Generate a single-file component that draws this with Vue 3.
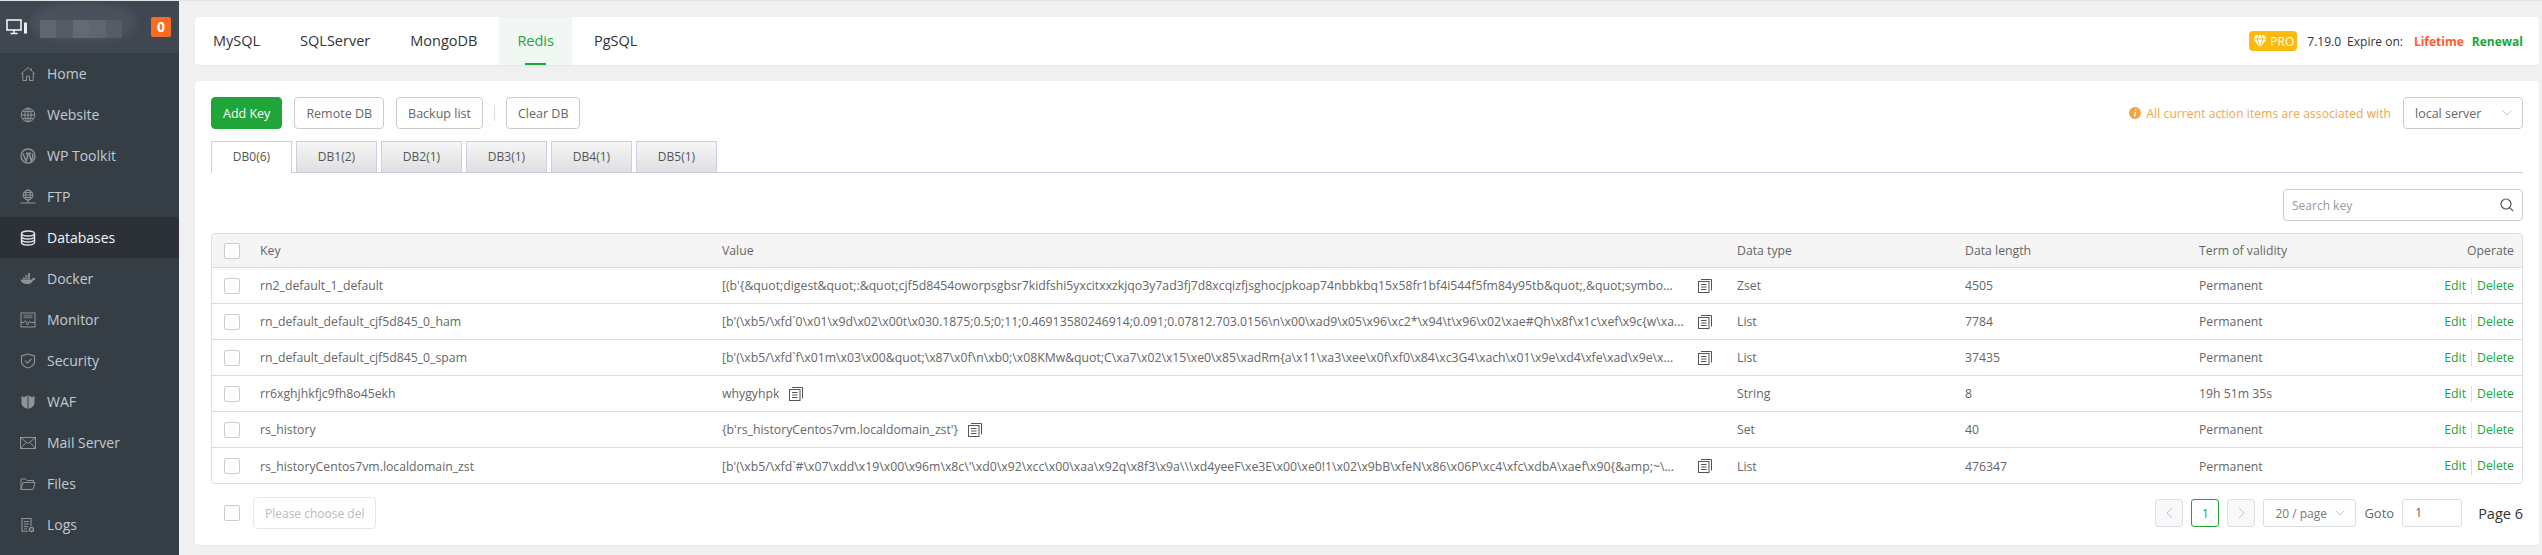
<script setup>
const menu = [
  { name: 'Home', icon: 'home' },
  { name: 'Website', icon: 'globe' },
  { name: 'WP Toolkit', icon: 'wp' },
  { name: 'FTP', icon: 'ftp' },
  { name: 'Databases', icon: 'db', active: true },
  { name: 'Docker', icon: 'docker' },
  { name: 'Monitor', icon: 'monitor' },
  { name: 'Security', icon: 'shield' },
  { name: 'WAF', icon: 'waf' },
  { name: 'Mail Server', icon: 'mail' },
  { name: 'Files', icon: 'folder' },
  { name: 'Logs', icon: 'logs' },
]
const dbTabs = ['MySQL', 'SQLServer', 'MongoDB', 'Redis', 'PgSQL']
const dbs = ['DB0(6)', 'DB1(2)', 'DB2(1)', 'DB3(1)', 'DB4(1)', 'DB5(1)']
const rows = [
  { key: 'rn2_default_1_default', value: "[(b'{&quot;digest&quot;:&quot;cjf5d8454oworpsgbsr7kidfshi5yxcitxxzkjqo3y7ad3fj7d8xcqizfjsghocjpkoap74nbbkbq15x58fr1bf4i544f5fm84y95tb&quot;,&quot;symbo...", type: 'Zset', len: '4505', term: 'Permanent', long: true },
  { key: 'rn_default_default_cjf5d845_0_ham', value: "[b'(\\xb5/\\xfd`0\\x01\\x9d\\x02\\x00t\\x030.1875;0.5;0;11;0.46913580246914;0.091;0.07812.703.0156\\n\\x00\\xad9\\x05\\x96\\xc2*\\x94\\t\\x96\\x02\\xae#Qh\\x8f\\x1c\\xef\\x9c{w\\xa...", type: 'List', len: '7784', term: 'Permanent', long: true },
  { key: 'rn_default_default_cjf5d845_0_spam', value: "[b'(\\xb5/\\xfd`f\\x01m\\x03\\x00&quot;\\x87\\x0f\\n\\xb0;\\x08KMw&quot;C\\xa7\\x02\\x15\\xe0\\x85\\xadRm{a\\x11\\xa3\\xee\\x0f\\xf0\\x84\\xc3G4\\xach\\x01\\x9e\\xd4\\xfe\\xad\\x9e\\x...", type: 'List', len: '37435', term: 'Permanent', long: true },
  { key: 'rr6xghjhkfjc9fh8o45ekh', value: 'whygyhpk', type: 'String', len: '8', term: '19h 51m 35s' },
  { key: 'rs_history', value: "{b'rs_historyCentos7vm.localdomain_zst'}", type: 'Set', len: '40', term: 'Permanent' },
  { key: 'rs_historyCentos7vm.localdomain_zst', value: "[b'(\\xb5/\\xfd`#\\x07\\xdd\\x19\\x00\\x96m\\x8c\\'\\xd0\\x92\\xcc\\x00\\xaa\\x92q\\x8f3\\x9a\\\\\\xd4yeeF\\xe3E\\x00\\xe0!1\\x02\\x9bB\\xfeN\\x86\\x06P\\xc4\\xfc\\xdbA\\xaef\\x90{&amp;~\\...", type: 'List', len: '476347', term: 'Permanent', long: true },
]
</script>

<template>
  <div class="page">
    <aside class="side">
      <div class="side-head">
        <svg class="pc" viewBox="0 0 22 16" width="22" height="16" fill="none" stroke="#f2f3f4" stroke-width="1.6">
          <rect x="1" y="1" width="14" height="10" />
          <path d="M8 11v3M4.5 14.500h7" />
          <rect x="18" y="3.500" width="3" height="11" fill="#f2f3f4" stroke="none" />
        </svg>
        <div class="blur-name">
          <span class="m1"></span><span class="m2"></span><span class="m3"></span><span class="m1"></span><span class="m2"></span>
        </div>
        <span class="badge">0</span>
      </div>
      <nav>
        <a v-for="m in menu" :key="m.name" class="item" :class="{ on: m.active }">
          <svg class="ic" viewBox="0 0 16 16" width="16" height="16" fill="none" stroke="currentColor" stroke-width="1">
            <template v-if="m.icon === 'home'">
              <path d="M.8 8.200 8 1.500l7.200 6.700M2.800 7v7.500h3.700v-4.300h3v4.300h3.700V7M11.500 2.500v2" />
            </template>
            <template v-else-if="m.icon === 'globe'">
              <circle cx="8" cy="8" r="6.800" />
              <ellipse cx="8" cy="8" rx="3.200" ry="6.800" />
              <path d="M8 1.200v13.600M1.200 8h13.600M2.200 4.600h11.600M2.200 11.400h11.600" />
            </template>
            <template v-else-if="m.icon === 'wp'">
              <circle cx="8" cy="8" r="7" stroke-width="1.300" />
              <path d="M3 5.500 6 13l1.800-5-1.300-2.800M6 5.200h5M9 5.300 11.300 13l1.500-4.200c.5-1.300 0-2.400-.9-3.400" stroke-width="1.500" />
            </template>
            <template v-else-if="m.icon === 'ftp'">
              <circle cx="8" cy="6" r="5" />
              <ellipse cx="8" cy="6" rx="2.300" ry="5" />
              <path d="M3 6h10M3.800 3.500h8.400M3.800 8.500h8.400M8 11v2.500M.5 14h15" stroke-width="1.100" />
            </template>
            <template v-else-if="m.icon === 'db'">
              <ellipse cx="8" cy="3.500" rx="6.500" ry="2.500" stroke-width="1.400" />
              <path d="M1.500 3.500v9c0 1.400 2.900 2.500 6.500 2.500s6.500-1.100 6.500-2.500v-9M1.500 6.500C1.500 7.900 4.400 9 8 9s6.500-1.100 6.500-2.500M1.500 9.500c0 1.400 2.900 2.500 6.500 2.500s6.500-1.100 6.500-2.500" stroke-width="1.400" />
            </template>
            <template v-else-if="m.icon === 'docker'">
              <path fill="currentColor" stroke="none" d="M.5 8.500h11.600c.3-1 1-1.500 2-1.400l1.400.3c-.3 1.300-1.200 2-2.500 2-1 2.400-3 3.600-6 3.600-3.800 0-6-1.600-6.500-4.500zM3 6.500h2v1.500H3zM5.500 6.500h2v1.500h-2zM8 6.500h2v1.500H8zM5.500 4.300h2v1.700h-2zM8 4.300h2v1.700H8zM8 2.200h2V4H8z" />
            </template>
            <template v-else-if="m.icon === 'monitor'">
              <rect x="1" y="1" width="14" height="14" />
              <path d="M1 10.500h3l1.500-2 2 4.500L9.500 9l1.200 1.500H15" />
              <path d="M3.500 3.500h9M3.500 5.500h9" stroke-width="1.500" opacity=".6" />
            </template>
            <template v-else-if="m.icon === 'shield'">
              <path d="M8 1 14.500 3v5.500c0 3.200-2.900 5.400-6.500 6.500-3.600-1.100-6.500-3.300-6.500-6.500V3zM5 7.500l2.300 2.500L11.500 6" stroke-width="1.100" />
            </template>
            <template v-else-if="m.icon === 'waf'">
              <path fill="currentColor" stroke="none" d="M1.500 2 4 3.200 8 1l4 2.200L14.500 2v7c0 3-3 5-6.500 6-3.500-1-6.500-3-6.500-6z" />
              <path stroke="#363e45" d="M8 1v14" />
            </template>
            <template v-else-if="m.icon === 'mail'">
              <rect x=".5" y="2.500" width="15" height="11" />
              <path d="m.5 2.500 7.500 6 7.500-6M.5 13.500 6 7.500M15.500 13.500 10 7.500" />
            </template>
            <template v-else-if="m.icon === 'folder'">
              <path d="M1 13.500V3h4.500l1.500 1.500h6.500v2M1 13.500 3 6.500h12.200L13 13.500z" />
            </template>
            <template v-else>
              <path d="M11 9V1.500H2v12.800h6M4 4.500h5M4 7h5M4 9.500h4M4 12h3" stroke-width="1.100" />
              <circle cx="11.500" cy="12.500" r="2" stroke-width="1.400" />
            </template>
          </svg>
          <span>{{ m.name }}</span>
        </a>
      </nav>
    </aside>

    <main class="main">
      <section class="card top">
        <div class="top-tabs">
          <a v-for="t in dbTabs" :key="t" class="top-tab" :class="{ on: t === 'Redis' }">{{ t }}</a>
        </div>
        <div class="ver">
          <span class="pro">
            <svg viewBox="0 0 14 12" width="14" height="12" fill="#fff">
              <path d="M3 0h2.200L4 3.500H.6zM6 0h2l1.100 3.500H4.900zM8.800 0H11l2.400 3.500H10zM.6 4.500H4L6.500 12zM5 4.500h4L7 12zM10 4.500h3.400L7.500 12z" />
            </svg>
            PRO
          </span>
          <span class="v">7.19.0</span>
          <span class="exp">Expire on:</span>
          <b class="life">Lifetime</b>
          <b class="renew">Renewal</b>
        </div>
      </section>

      <section class="card body">
        <div class="toolbar">
          <div class="btns">
            <button class="btn primary">Add Key</button>
            <button class="btn">Remote DB</button>
            <button class="btn">Backup list</button>
            <i class="vr"></i>
            <button class="btn">Clear DB</button>
          </div>
          <div class="assoc">
            <svg viewBox="0 0 12 12" width="12" height="12">
              <circle cx="6" cy="6" r="6" fill="#efa648" />
              <path d="M6.700 2.300v1.300M6.400 5l-.8 4.500" stroke="#fff" stroke-width="1.400" fill="none" />
            </svg>
            <span class="assoc-t">All current action items are associated with</span>
            <div class="select">
              <span>local server</span>
              <svg viewBox="0 0 10 6" width="10" height="6" fill="none" stroke="#c4c6cb"><path d="m.5.500 4.500 4.500L9.500.500" /></svg>
            </div>
          </div>
        </div>

        <div class="db-tabs">
          <a v-for="(d, i) in dbs" :key="d" class="db-tab" :class="{ on: i === 0 }">{{ d }}</a>
        </div>

        <div class="search-row">
          <div class="search">
            <span>Search key</span>
            <svg viewBox="0 0 14 14" width="14" height="14" fill="none" stroke="#555" stroke-width="1.200"><circle cx="6" cy="6" r="5" /><path d="m9.600 9.600 3.600 3.600" /></svg>
          </div>
        </div>

        <div class="table-wrap">
          <table>
            <colgroup>
              <col class="c0" /><col class="c1" /><col class="c2" /><col class="c3" /><col class="c4" /><col class="c5" /><col />
            </colgroup>
            <thead>
              <tr>
                <th><i class="cb"></i></th>
                <th>Key</th><th>Value</th><th>Data type</th><th>Data length</th><th>Term of validity</th>
                <th class="r">Operate</th>
              </tr>
            </thead>
            <tbody>
              <tr v-for="r in rows" :key="r.key">
                <td><i class="cb"></i></td>
                <td>{{ r.key }}</td>
                <td>
                  <div class="val" :class="{ long: r.long }">
                    <span class="val-t">{{ r.value }}</span>
                    <svg class="copy" viewBox="0 0 14 14" width="14" height="14" fill="none" stroke="#555"><rect x=".5" y="2.500" width="10.500" height="11" /><path d="M3 5.500h5.500M3 8h5.500M3 10.500h5.500M3 .5h10.500v11" /></svg>
                  </div>
                </td>
                <td>{{ r.type }}</td>
                <td>{{ r.len }}</td>
                <td>{{ r.term }}</td>
                <td class="r ops"><a>Edit</a><i></i><a>Delete</a></td>
              </tr>
            </tbody>
          </table>
        </div>

        <div class="foot">
          <div class="foot-l">
            <i class="cb"></i>
            <button class="btn ghost">Please choose del</button>
          </div>
          <div class="pager">
            <span class="pg dis"><svg viewBox="0 0 7 12" width="7" height="12" fill="none" stroke="#c0c4cc"><path d="M6 1 1 6l5 5" /></svg></span>
            <span class="pg cur">1</span>
            <span class="pg dis"><svg viewBox="0 0 7 12" width="7" height="12" fill="none" stroke="#c0c4cc"><path d="m1 1 5 5-5 5" /></svg></span>
            <span class="size">20 / page<svg viewBox="0 0 10 6" width="10" height="6" fill="none" stroke="#c4c6cb"><path d="m.5.500 4.500 4.500L9.500.500" /></svg></span>
            <span class="goto">Goto</span>
            <span class="go-in">1</span>
            <span class="total">Page 6</span>
          </div>
        </div>
      </section>
    </main>
  </div>
</template>

<style>
html, body { margin: 0; background: #f0f0f0; }
</style>

<style scoped>
.page { display: flex; height: 554px; border-top: 1px solid #e2e2e2; overflow: hidden; background: #f0f0f0; font-family: "Open Sans", "Noto Sans", sans-serif; font-size: 12px; color: #666; }
.side { width: 179px; flex: none; background: #363e45; }
.side-head { height: 52px; background: #3f4750; display: flex; align-items: center; padding: 0 8px 0 6px; position: relative; box-sizing: border-box; }
.pc { flex: none; margin-top: -1px; }
.blur-name { flex: 1; height: 18px; margin: 0 29px 0 12px; display: flex; position: relative; top: 2px; }
.blur-name::before { content: ""; position: absolute; left: -9px; right: -14px; top: -17px; bottom: -4px; background: #49515a; border-radius: 45%; filter: blur(3px); }
.blur-name span { flex: 1; position: relative; }
.m1 { background: #5f666d; }
.m2 { background: #555c65; }
.m3 { background: #646a71; }
.badge { width: 20px; height: 20px; flex: none; background: #fb6a21; color: #fff; font-weight: 700; font-size: 14px; line-height: 20px; text-align: center; border-radius: 2px; margin-top: -1px; }
.item { height: 41px; display: flex; align-items: center; gap: 11px; padding-left: 20px; font-size: 14px; color: #c3cad1; }
.item .ic { color: #8e9499; flex: none; }
.item.on { background: #2c3138; color: #f4f6f8; }
.item.on .ic { color: #e2e4e6; }

.main { flex: 1; min-width: 0; padding: 16px 3px 0 16px; display: flex; flex-direction: column; gap: 16px; }
.card { background: #fff; border-radius: 4px; box-shadow: 0 1px 1px rgba(0, 0, 0, .04); }
.top { height: 48px; display: flex; justify-content: space-between; align-items: center; padding: 0 16px 0 18px; box-sizing: border-box; }
.top-tabs { display: flex; gap: 4px; height: 100%; margin-left: -18px; padding-left: 0; }
.top-tab { position: relative; padding: 0 18px; line-height: 48px; font-size: 14.5px; color: #333; }
.top-tab.on { background: #f1f8f3; color: #20a53a; }
.top-tab.on::after { content: ""; position: absolute; left: 26px; right: 26px; bottom: 0; height: 2px; background: #20a53a; }
.ver { display: flex; align-items: center; color: #333; font-size: 12px; }
.pro { display: flex; align-items: center; gap: 3px; width: 48px; height: 20px; box-sizing: border-box; padding-left: 4px; background: #fdb90c; color: #fff; border-radius: 4px; font-size: 12px; font-weight: 400; margin-right: 10px; }
.v { margin-right: 6px; }
.exp { margin-right: 11px; }
.life { color: #ff5a2b; margin-right: 8px; }
.renew { color: #20a53a; }

.body { flex: none; height: 464px; box-sizing: border-box; padding: 16px; display: flex; flex-direction: column; }
.toolbar { display: flex; justify-content: space-between; height: 32px; }
.btns { display: flex; align-items: center; gap: 12px; }
.btn { height: 32px; padding: 0 11px; background: #fff; border: 1px solid #ccc; border-radius: 4px; color: #666; font: inherit; font-size: 12.5px; box-sizing: border-box; }
.primary { background: #20a53a; border-color: #20a53a; color: #fff; }
.vr { width: 1px; height: 16px; background: #ddd; margin: 0 -1px; }
.assoc { display: flex; align-items: center; color: #efa648; }
.assoc-t { margin-left: 5px; letter-spacing: .1px; }
.select { width: 120px; height: 32px; margin-left: 12px; box-sizing: border-box; border: 1px solid #ccc; border-radius: 4px; padding: 0 10px 0 11px; display: flex; align-items: center; justify-content: space-between; color: #666; font-size: 12.5px; }
.db-tabs { margin-top: 12px; display: flex; gap: 4px; height: 32px; box-sizing: border-box; border-bottom: 1px solid #cfcde0; }
.db-tab { width: 81px; height: 31px; box-sizing: border-box; border: 1px solid #cfcde0; border-bottom: none; text-align: center; line-height: 30px; color: #555; background: linear-gradient(#f6f6f6, #dfdfe2); }
.db-tab.on { height: 32px; background: #fff; }
.search-row { margin-top: 16px; display: flex; justify-content: flex-end; }
.search { width: 240px; height: 32px; box-sizing: border-box; border: 1px solid #ccc; border-radius: 4px; padding: 0 8px; display: flex; align-items: center; justify-content: space-between; color: #999; }
.table-wrap { margin-top: 12px; border: 1px solid #ddd; border-radius: 4px; overflow: hidden; }
table { width: 100%; border-collapse: collapse; table-layout: fixed; font-size: 12.25px; }
.c0 { width: 38px; } .c1 { width: 462px; } .c2 { width: 1015px; } .c3 { width: 228px; } .c4 { width: 234px; } .c5 { width: 240px; }
th { height: 33px; background: #f5f5f5; font-weight: 400; text-align: left; padding: 0 10px; color: #666; border-bottom: 1px solid #ddd; }
td { height: 35px; padding: 0 10px; border-bottom: 1px solid #ddd; color: #666; white-space: nowrap; }
tr:last-child td { border-bottom: none; height: 36px; }
th:first-child, td:first-child { padding: 0 0 0 12px; }
th:last-child, td:last-child { padding-right: 8px; }
.r { text-align: right; }
.cb { display: block; width: 16px; height: 16px; box-sizing: border-box; border: 1px solid #ccc; border-radius: 2px; background: #fff; }
.val { display: flex; align-items: center; gap: 10px; }
.val.long { justify-content: space-between; padding-right: 5px; }
.val-t { overflow: hidden; white-space: nowrap; }
.copy { flex: none; }
.ops { color: #20a53a; }
.ops i { display: inline-block; width: 1px; height: 16px; background: #ddd; margin: 0 5px; vertical-align: middle; }
.foot { margin-top: 13px; display: flex; justify-content: space-between; height: 32px; }
.foot-l { display: flex; align-items: center; gap: 13px; padding-left: 13px; }
.ghost { color: #bbb; border-color: #e6e6e6; padding: 0 11px; font-size: 12px; }
.pager { display: flex; align-items: center; gap: 8px; }
.pg { width: 28px; height: 28px; box-sizing: border-box; border: 1px solid #ddd; border-radius: 3px; display: flex; align-items: center; justify-content: center; }
.dis { background: #f8f8fa; }
.cur { border-color: #20a53a; color: #20a53a; }
.size { width: 93px; height: 28px; box-sizing: border-box; border: 1px solid #ddd; border-radius: 3px; display: flex; align-items: center; justify-content: space-between; padding: 0 10px 0 11px; color: #777; }
.goto { color: #666; font-size: 13px; }
.go-in { width: 60px; height: 28px; box-sizing: border-box; border: 1px solid #ddd; border-radius: 3px; padding-left: 12px; line-height: 26px; }
.total { margin-left: 8px; font-size: 14.5px; color: #333; }
</style>
